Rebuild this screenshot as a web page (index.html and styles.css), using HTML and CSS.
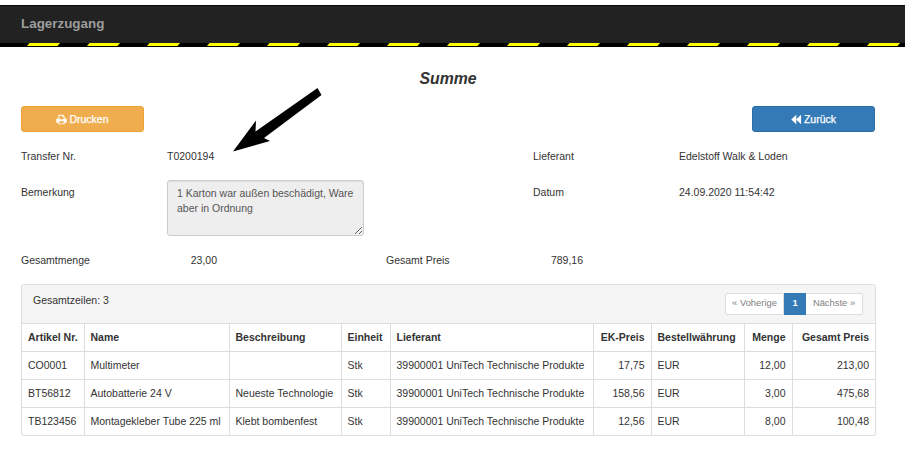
FILE: index.html
```html
<!DOCTYPE html>
<html lang="de">
<head>
<meta charset="utf-8">
<title>Lagerzugang</title>
<link rel="stylesheet" href="styles.css">
</head>
<body>
<header class="topbar">
  <div class="topbar-main"><span class="brand">Lagerzugang</span></div>
  <div class="hazard"></div>
</header>
<main class="content">
  <h1 class="title">Summe</h1>
  <div class="actions">
    <button class="btn btn-orange" type="button">
      <svg class="icon" viewBox="0 0 12 12" aria-hidden="true"><path fill="#fff" fill-rule="evenodd" d="M2.6 .8h5.2L9.4 2.4V5h1c.8 0 1.3.5 1.3 1.2v3.3H9.4v1.8H2.6V9.5H.3V6.2C.3 5.5.8 5 1.6 5h1zM3.7 1.8V5.8h4.6V3.2H7V1.8zM3.7 8v2.3h4.6V8z"/></svg>
      Drucken
    </button>
    <button class="btn btn-blue" type="button">
      <svg class="icon" viewBox="0 0 12 12" aria-hidden="true"><path fill="#fff" d="M.3 6L5.8 .8V11.2zM5.6 6L11 .8V11.2z"/></svg>
      Zurück
    </button>
  </div>
  <section class="info">
    <div>Transfer Nr.</div>
    <div>T0200194</div>
    <div>Lieferant</div>
    <div>Edelstoff Walk &amp; Loden</div>
    <div class="offset">Bemerkung</div>
    <div><textarea class="note" readonly>1 Karton war außen beschädigt, Ware aber in Ordnung</textarea></div>
    <div class="offset">Datum</div>
    <div class="offset">24.09.2020 11:54:42</div>
  </section>
  <section class="totals">
    <div>Gesamtmenge</div>
    <div class="num">23,00</div>
    <div class="second">Gesamt Preis</div>
    <div class="num">789,16</div>
  </section>
  <section class="panel">
    <div class="panel-head">
      <span class="count">Gesamtzeilen: 3</span>
      <nav class="pager">
        <a class="page page-prev">« Voherige</a>
        <a class="page page-active">1</a>
        <a class="page page-next">Nächste »</a>
      </nav>
    </div>
    <table class="grid">
      <colgroup>
        <col class="c1"><col class="c2"><col class="c3"><col class="c4"><col class="c5"><col class="c6"><col class="c7"><col class="c8"><col class="c9">
      </colgroup>
      <thead>
        <tr><th>Artikel Nr.</th><th>Name</th><th>Beschreibung</th><th>Einheit</th><th>Lieferant</th><th class="r">EK-Preis</th><th>Bestellwährung</th><th class="r">Menge</th><th class="r">Gesamt Preis</th></tr>
      </thead>
      <tbody>
        <tr><td>CO0001</td><td>Multimeter</td><td></td><td>Stk</td><td>39900001 UniTech Technische Produkte</td><td class="r">17,75</td><td>EUR</td><td class="r">12,00</td><td class="r">213,00</td></tr>
        <tr><td>BT56812</td><td>Autobatterie 24 V</td><td>Neueste Technologie</td><td>Stk</td><td>39900001 UniTech Technische Produkte</td><td class="r">158,56</td><td>EUR</td><td class="r">3,00</td><td class="r">475,68</td></tr>
        <tr><td>TB123456</td><td>Montagekleber Tube 225 ml</td><td>Klebt bombenfest</td><td>Stk</td><td>39900001 UniTech Technische Produkte</td><td class="r">12,56</td><td>EUR</td><td class="r">8,00</td><td class="r">100,48</td></tr>
      </tbody>
    </table>
  </section>
</main>
<svg class="arrow" viewBox="0 0 905 460" aria-hidden="true"><path fill="#000" d="M317.5 88L321.5 95L264 138L270 141L233 151.500L256 120.500L255.500 131.500Z"/></svg>
</body>
</html>
```
FILE: styles.css
```css
* { box-sizing: border-box; }
html, body { margin: 0; padding: 0; }
body {
  background: #fff;
  color: #333;
  font-family: "Liberation Sans", Arial, sans-serif;
  font-size: 10.5px;
  line-height: 16px;
  padding-top: 5px;
  overflow: hidden;
}
.topbar { height: 42px; background: #222; border-top: 1px solid #080808; }
.topbar-main { height: 37px; padding: 0 0 2px 21px; display: flex; align-items: center; }
.brand { color: #9d9d9d; font-size: 13.4px; font-weight: bold; }
.hazard {
  height: 4px;
  background-color: #000;
  background-image: url("data:image/svg+xml,%3Csvg xmlns='http://www.w3.org/2000/svg' width='60' height='3'%3E%3Cpath fill='%23ff0' d='M27 3L29.500 0H60L57.500 3Z'/%3E%3C/svg%3E");
  background-size: 60px 3px;
  background-repeat: repeat-x;
}
.content { padding: 0 30px 0 21px; }
.title {
  margin: 22px 0 0;
  height: 19px;
  text-align: center;
  font-size: 15.8px;
  line-height: 19px;
  font-weight: bold;
  font-style: italic;
  color: #333;
}
.actions { display: flex; justify-content: space-between; margin-top: 18px; }
.btn {
  width: 123px;
  height: 26px;
  border: 1px solid;
  border-radius: 3px;
  color: #fff;
  font: 10.5px/16px "Liberation Sans", Arial, sans-serif;
  -webkit-text-stroke: .25px #fff;
  padding: 0;
  display: flex;
  align-items: center;
  justify-content: center;
  gap: 2px;
}
.btn-orange { background: #f0ad4e; border-color: #eea236; }
.btn-blue { background: #337ab7; border-color: #2e6da4; }
.icon { width: 11px; height: 11px; }
.info {
  display: grid;
  grid-template-columns: 146px 366px 146px 1fr;
  grid-template-rows: 32px 56px;
  margin-top: 16px;
}
.offset { padding-top: 4px; }
.note {
  display: block;
  width: 197px;
  height: 56px;
  margin: 0;
  padding: 5px 9px;
  border: 1px solid #ccc;
  border-radius: 3px;
  background: #eee;
  color: #555;
  font: 10.5px/15px "Liberation Sans", Arial, sans-serif;
  box-shadow: inset 0 1px 1px rgba(0,0,0,.075);
  outline: none;
}
.totals {
  display: grid;
  grid-template-columns: 146px 50px 169px 100px 97px;
  margin-top: 16px;
}
.totals .num { text-align: right; }
.totals .second { grid-column: 4; }
.panel {
  width: 855px;
  margin-top: 16px;
  border: 1px solid #ddd;
  border-radius: 3px;
  box-shadow: 0 1px 1px rgba(0,0,0,.05);
  background: #fff;
  overflow: hidden;
}
.panel-head {
  height: 39px;
  background: #f5f5f5;
  border-bottom: 1px solid #ddd;
  padding: 8px 12px 0 11px;
  display: flex;
  justify-content: space-between;
  align-items: flex-start;
}
.count { line-height: 14px; }
.pager { display: flex; height: 22px; }
.page {
  height: 22px;
  border: 1px solid #ddd;
  background: #fff;
  color: #808080;
  font-size: 9.4px;
  line-height: 18px;
  text-align: center;
}
.page-prev { width: 59px; border-radius: 3px 0 0 3px; }
.page-active { width: 22px; background: #337ab7; border-color: #337ab7; color: #fff; font-weight: bold; }
.page-next { width: 57px; border-left: 0; border-radius: 0 3px 3px 0; }
.grid { width: 853px; table-layout: fixed; border-collapse: collapse; }
.grid th, .grid td {
  height: 28px;
  padding: 0 6px;
  border-left: 1px solid #ddd;
  border-top: 1px solid #ddd;
  text-align: left;
  white-space: nowrap;
  overflow: hidden;
}
.grid thead tr:first-child th { border-top: 0; height: 27px; }
.grid th:first-child, .grid td:first-child { border-left: 0; }
.grid .r { text-align: right; }
.c1 { width: 62px; }
.c2 { width: 145px; }
.c3 { width: 112px; }
.c4 { width: 49px; }
.c5 { width: 203px; }
.c6 { width: 58px; }
.c7 { width: 93px; }
.c8 { width: 48px; }
.c9 { width: 83px; }
.arrow { position: absolute; left: 0; top: 0; width: 905px; height: 460px; pointer-events: none; }
```
